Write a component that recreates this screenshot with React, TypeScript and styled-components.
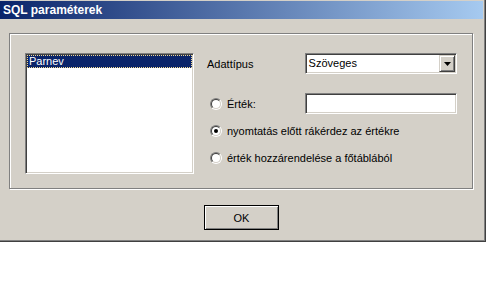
import React from "react";
import styled, { createGlobalStyle } from "styled-components";

const GlobalStyle = createGlobalStyle`
  html, body {
    margin: 0;
    background: #ffffff;
  }
  body {
    font-family: "Liberation Sans", Arial, sans-serif;
    font-size: 11px;
    color: #000000;
  }
`;

const App: React.FC = () => {
  return (
    <>
      <GlobalStyle />
      <Window>
        <TitleBar>SQL paraméterek</TitleBar>
        <Body>
          <GroupBox>
            <ListBox>
              <ListItem selected>Parnev</ListItem>
            </ListBox>
            <Fields>
              <FieldRow mt={0}>
                <Label>Adattípus</Label>
                <Combo>
                  <ComboText>Szöveges</ComboText>
                  <DropButton>
                    <svg width="7" height="4" viewBox="0 0 7 4">
                      <path d="M0 0h7L3.5 4z" fill="#000" />
                    </svg>
                  </DropButton>
                </Combo>
              </FieldRow>
              <FieldRow mt={19}>
                <RadioLabel>
                  <Radio />
                  <span>Érték:</span>
                </RadioLabel>
                <TextBox />
              </FieldRow>
              <FieldRow mt={6}>
                <RadioLabel>
                  <Radio checked />
                  <span>nyomtatás előtt rákérdez az értékre</span>
                </RadioLabel>
              </FieldRow>
              <FieldRow mt={6}>
                <RadioLabel>
                  <Radio />
                  <span>érték hozzárendelése a főtáblából</span>
                </RadioLabel>
              </FieldRow>
            </Fields>
          </GroupBox>
          <ButtonRow>
            <OkButton>OK</OkButton>
          </ButtonRow>
        </Body>
      </Window>
    </>
  );
};

const Radio: React.FC<{ checked?: boolean }> = ({ checked }) => (
  <RadioOuter>
    <RadioInner>{checked && <RadioDot />}</RadioInner>
  </RadioOuter>
);

export default App;

const Window = styled.div`
  width: 486px;
  height: 242px;
  box-sizing: border-box;
  padding-top: 1px;
  background: #d4d0c8;
  box-shadow: inset -1px -1px 0 #404040, inset -2px -2px 0 #808080;
  display: flex;
  flex-direction: column;
`;
const TitleBar = styled.div`
  height: 18px;
  margin-right: 3px;
  padding-left: 3px;
  display: flex;
  align-items: center;
  background: linear-gradient(to right, #0a246a, #a6caf0);
  color: #ffffff;
  font-weight: bold;
  font-size: 12px;
`;
const Body = styled.div`
  padding: 14px 0 0 9px;
  display: flex;
  flex-direction: column;
`;
const GroupBox = styled.div`
  width: 464px;
  height: 156px;
  box-sizing: border-box;
  border: 1px solid #808080;
  box-shadow: inset 1px 1px 0 #ffffff, 1px 1px 0 #ffffff;
  padding: 19px 0 0 15px;
  display: flex;
  gap: 13px;
`;
const ListBox = styled.div`
  width: 169px;
  height: 121px;
  box-sizing: border-box;
  padding: 1px;
  background: #ffffff;
  border: 1px solid;
  border-color: #808080 #ffffff #ffffff #808080;
  box-shadow: inset 1px 1px 0 #404040, inset -1px -1px 0 #d4d0c8;
`;
const ListItem = styled.div<{ selected?: boolean }>`
  height: 13px;
  line-height: 13px;
  padding-left: 2px;
  background: ${(p) => (p.selected ? "#0a246a" : "transparent")};
  color: ${(p) => (p.selected ? "#ffffff" : "#000000")};
  outline: ${(p) => (p.selected ? "1px dotted #f0d890" : "none")};
  outline-offset: -1px;
`;
const Fields = styled.div`
  width: 250px;
  display: flex;
  flex-direction: column;
`;
const FieldRow = styled.div<{ mt: number }>`
  height: 21px;
  margin-top: ${(p) => p.mt}px;
  display: flex;
  align-items: center;
`;
const Label = styled.div`
  width: 98px;
`;
const Combo = styled.div`
  width: 153px;
  height: 21px;
  box-sizing: border-box;
  padding: 1px;
  background: #ffffff;
  border: 1px solid;
  border-color: #808080 #ffffff #ffffff #808080;
  box-shadow: inset 1px 1px 0 #404040, inset -1px -1px 0 #d4d0c8;
  display: flex;
`;
const ComboText = styled.div`
  flex: 1;
  padding-left: 2px;
  line-height: 17px;
`;
const DropButton = styled.div`
  width: 16px;
  height: 17px;
  box-sizing: border-box;
  background: #d4d0c8;
  border: 1px solid;
  border-color: #d4d0c8 #404040 #404040 #d4d0c8;
  box-shadow: inset 1px 1px 0 #ffffff, inset -1px -1px 0 #808080;
  display: flex;
  align-items: center;
  justify-content: center;
`;
const TextBox = styled.div`
  width: 153px;
  height: 21px;
  box-sizing: border-box;
  background: #ffffff;
  border: 1px solid;
  border-color: #808080 #ffffff #ffffff #808080;
  box-shadow: inset 1px 1px 0 #404040, inset -1px -1px 0 #d4d0c8;
`;
const RadioLabel = styled.div`
  width: 98px;
  padding-left: 3px;
  box-sizing: border-box;
  display: flex;
  align-items: center;
  gap: 5px;
  white-space: nowrap;
`;
const RadioOuter = styled.span`
  width: 12px;
  height: 12px;
  box-sizing: border-box;
  flex-shrink: 0;
  border-radius: 50%;
  border: 1px solid;
  border-color: #808080 #ffffff #ffffff #808080;
  display: flex;
`;
const RadioInner = styled.span`
  flex: 1;
  border-radius: 50%;
  border: 1px solid;
  border-color: #404040 #d4d0c8 #d4d0c8 #404040;
  background: #ffffff;
  display: flex;
  align-items: center;
  justify-content: center;
`;
const RadioDot = styled.span`
  width: 4px;
  height: 4px;
  border-radius: 50%;
  background: #000000;
`;
const ButtonRow = styled.div`
  width: 465px;
  margin-top: 16px;
  display: flex;
  justify-content: center;
`;
const OkButton = styled.div`
  width: 75px;
  height: 25px;
  box-sizing: border-box;
  border: 1px solid #000000;
  background: #d4d0c8;
  box-shadow: inset 1px 1px 0 #ffffff, inset -1px -1px 0 #808080;
  display: flex;
  align-items: center;
  justify-content: center;
`;
